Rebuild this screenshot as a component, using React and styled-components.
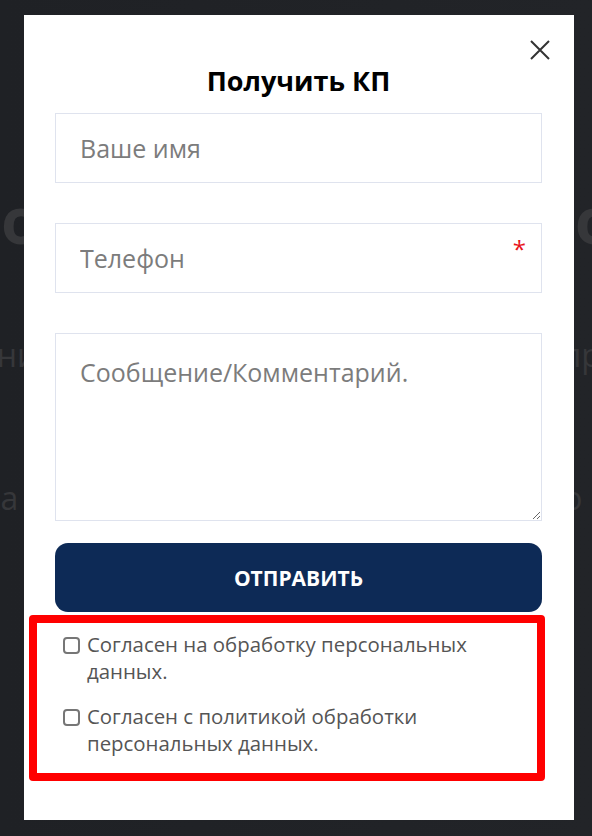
import React from 'react'
import styled, { createGlobalStyle } from 'styled-components'

const GlobalStyle = createGlobalStyle`
    html, body {
        margin: 0;
        padding: 0;
        background: #1f2125;
    }
    * {
        box-sizing: border-box;
    }
`

const App = () => {
    return (
        <Page>
            <GlobalStyle />
            <Backdrop>
                <HeroLine size="64px" top="176px" weight="700">Комплексное оснащение производству</HeroLine>
                <HeroLine size="32px" top="70px" weight="400">Оборудование и монтаж под ключ для вашего предприятия</HeroLine>
                <HeroLine size="32px" top="100px" weight="400">Поставка и сервис оборудования для вашего бизнеса</HeroLine>
            </Backdrop>
            <Modal>
                <CloseButton aria-label="Закрыть">
                    <svg width="22" height="22" viewBox="0 0 22 22">
                        <path d="M2 2L20 20M20 2L2 20" stroke="#333" strokeWidth="2" fill="none" />
                    </svg>
                </CloseButton>
                <Title>Получить КП</Title>
                <Form onSubmit={e => e.preventDefault()}>
                    <Field>
                        <Input placeholder="Ваше имя" />
                    </Field>
                    <Field>
                        <Input placeholder="Телефон" />
                        <Required>*</Required>
                    </Field>
                    <Field>
                        <TextArea placeholder="Сообщение/Комментарий." />
                    </Field>
                    <SubmitButton type="submit">Отправить</SubmitButton>
                    <ConsentBox>
                        <ConsentRow>
                            <Checkbox type="checkbox" />
                            <ConsentText>Согласен на обработку персональных данных.</ConsentText>
                        </ConsentRow>
                        <ConsentRow>
                            <Checkbox type="checkbox" />
                            <ConsentText>Согласен с политикой обработки персональных данных.</ConsentText>
                        </ConsentRow>
                    </ConsentBox>
                </Form>
            </Modal>
        </Page>
    )
}

const Page = styled.div`
    position: relative;
    min-height: 836px;
    overflow: hidden;
    background: linear-gradient(90deg, #1f2125 0%, #222428 100%);
    font-family: "Open Sans", "Noto Sans", sans-serif;
`

const Backdrop = styled.div`
    display: flex;
    flex-direction: column;
    align-items: center;
    `

const HeroLine = styled.div`
    display: flex;
    justify-content: center;
    width: 100%;
    margin-top: ${p => p.top};
    white-space: nowrap;
    color: #36373a;
    font-size: ${p => p.size};
    font-weight: ${p => p.weight};
    `

const Modal = styled.div`
    position: absolute;
    top: 15px;
    left: 24px;
    width: 550px;
    height: 805px;
    background: #ffffff;
    padding: 48px 32px 0 31px;
    `

const CloseButton = styled.button`
    position: absolute;
    top: 24px;
    right: 23px;
    padding: 0;
    border: none;
    background: none;
    cursor: pointer;
    display: flex;
    `

const Title = styled.h2`
    margin: 0 0 14px 0;
    text-align: center;
    font-size: 27px;
    line-height: 36px;
    font-weight: 700;
    color: #000000;
    `

const Form = styled.form`
    display: flex;
    flex-direction: column;
    `

const Field = styled.div`
    position: relative;
    margin-bottom: 40px;
    &:nth-child(3) {
        margin-bottom: 22px;
    }
    `

const fieldStyles = `
    display: block;
    width: 100%;
    border: 1px solid #dfe3ee;
    border-radius: 0;
    background: #ffffff;
    font-family: "Open Sans", "Noto Sans", sans-serif;
    font-size: 25px;
    color: #333;
    outline: none;
    &::placeholder {
        color: #7c7c7c;
    }
`

const Input = styled.input`
    ${fieldStyles}
    height: 70px;
    padding: 0 50px 0 24px;
    `

const TextArea = styled.textarea`
    ${fieldStyles}
    height: 188px;
    padding: 21px 24px;
    line-height: 34px;
    resize: vertical;
    `

const Required = styled.span`
    position: absolute;
    top: 9px;
    right: 16px;
    color: #e8141b;
    font-size: 24px;
    font-weight: 400;
    `

const SubmitButton = styled.button`
    height: 69px;
    border: none;
    border-radius: 13px;
    background: #0d2a56;
    color: #ffffff;
    font-family: "Open Sans", "Noto Sans", sans-serif;
    font-size: 21px;
    font-weight: 700;
    text-transform: uppercase;
    cursor: pointer;
    `

const ConsentBox = styled.div`
    display: flex;
    flex-direction: column;
    gap: 18px;
    margin: 3px -3px 0 -26px;
    padding: 8px 26px 16px 26px;
    border: 8px solid #ff0000;
    border-radius: 4px;
    `

const ConsentRow = styled.label`
    display: flex;
    align-items: flex-start;
    gap: 7px;
    cursor: pointer;
    `

const Checkbox = styled.input`
    appearance: none;
    flex: none;
    width: 17px;
    height: 17px;
    margin: 6px 0 0 0;
    border: 2px solid #767676;
    border-radius: 4px;
    background: #ffffff;
    `

const ConsentText = styled.span`
    font-size: 20.4px;
    line-height: 27px;
    color: #555555;
    `

export default App
